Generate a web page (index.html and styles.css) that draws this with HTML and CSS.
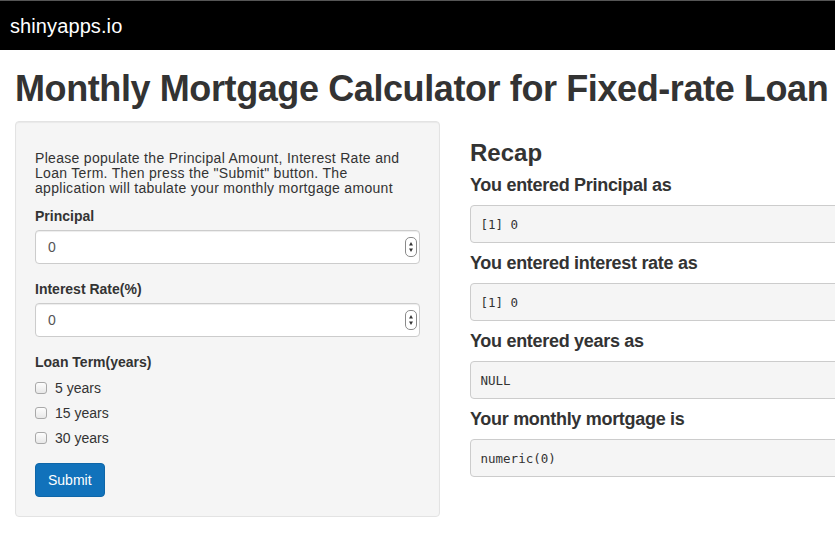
FILE: index.html
```html
<!DOCTYPE html>
<html>
<head>
<meta charset="utf-8">
<title>Monthly Mortgage Calculator</title>
<link rel="stylesheet" href="styles.css">
</head>
<body>
<div class="navbar"><span class="brand">shinyapps.io</span></div>
<div class="page">
  <h1 class="title">Monthly Mortgage Calculator for Fixed-rate Loan</h1>
  <div class="row">
    <div class="col-side">
      <form class="well">
        <h5 class="help">Please populate the Principal Amount, Interest Rate and Loan Term. Then press the "Submit" button. The application will tabulate your monthly mortgage amount</h5>
        <div class="form-group">
          <label class="control-label">Principal</label>
          <div class="num">
            <input class="form-control" type="text" value="0">
            <svg class="spin" width="12" height="20" viewBox="0 0 12 20"><rect x="0.5" y="0.5" width="11" height="19" rx="4.5" fill="#fff" stroke="#8a8a8a"/><path d="M6 5 L8 8.5 L4 8.5 Z" fill="#333"/><path d="M6 15 L8 11.5 L4 11.5 Z" fill="#333"/></svg>
          </div>
        </div>
        <div class="form-group">
          <label class="control-label">Interest Rate(%)</label>
          <div class="num">
            <input class="form-control" type="text" value="0">
            <svg class="spin" width="12" height="20" viewBox="0 0 12 20"><rect x="0.5" y="0.5" width="11" height="19" rx="4.5" fill="#fff" stroke="#8a8a8a"/><path d="M6 5 L8 8.5 L4 8.5 Z" fill="#333"/><path d="M6 15 L8 11.5 L4 11.5 Z" fill="#333"/></svg>
          </div>
        </div>
        <div class="form-group">
          <label class="control-label">Loan Term(years)</label>
          <div class="options">
            <label class="checkbox"><input type="checkbox"><span>5 years</span></label>
            <label class="checkbox"><input type="checkbox"><span>15 years</span></label>
            <label class="checkbox"><input type="checkbox"><span>30 years</span></label>
          </div>
        </div>
        <button type="button" class="btn">Submit</button>
      </form>
    </div>
    <div class="col-main">
      <h3 class="recap">Recap</h3>
      <h4>You entered Principal as</h4>
      <pre>[1] 0</pre>
      <h4>You entered interest rate as</h4>
      <pre>[1] 0</pre>
      <h4>You entered years as</h4>
      <pre>NULL</pre>
      <h4>Your monthly mortgage is</h4>
      <pre>numeric(0)</pre>
    </div>
  </div>
</div>
</body>
</html>
```

FILE: styles.css
```css
html, body {
  margin: 0;
  padding: 0;
  background: #fff;
  overflow: hidden;
}
body {
  font-family: "Liberation Sans", Arial, sans-serif;
  font-size: 14px;
  color: #333;
  width: 1365px;
}
.navbar {
  height: 50px;
  background: #000;
  border-top: 1px solid #555;
  box-sizing: border-box;
  display: flex;
  align-items: center;
  padding-left: 10px;
}
.brand {
  color: #fff;
  font-size: 20px;
  line-height: 24px;
  letter-spacing: 0.1px;
}
.page {
  padding: 0 15px;
}
.title {
  margin: 19px 0 12px;
  font-size: 36px;
  line-height: 40px;
  font-weight: bold;
  letter-spacing: -0.4px;
  color: #333;
  white-space: nowrap;
}
.row {
  display: flex;
  margin: 0 -15px;
}
.col-side {
  width: 455px;
  padding: 0 15px;
  box-sizing: border-box;
}
.col-main {
  flex: 1;
  padding: 0 15px;
}
.well {
  margin: 0;
  background: #f5f5f5;
  border: 1px solid #e3e3e3;
  border-radius: 4px;
  padding: 19px;
  box-shadow: inset 0 1px 1px rgba(0,0,0,0.05);
}
.help {
  margin: 10px 0 10px;
  font-size: 14px;
  line-height: 15px;
  font-weight: normal;
  letter-spacing: 0.3px;
}
.form-group {
  margin-bottom: 15px;
}
.control-label {
  display: block;
  font-weight: bold;
  line-height: 20px;
  margin-bottom: 4px;
}
.num {
  position: relative;
}
.form-control {
  display: block;
  box-sizing: border-box;
  width: 100%;
  height: 34px;
  padding: 6px 12px;
  font-family: "Liberation Sans", Arial, sans-serif;
  font-size: 14px;
  color: #555;
  background: #fff;
  border: 1px solid #ccc;
  border-radius: 4px;
  box-shadow: inset 0 1px 1px rgba(0,0,0,0.075);
  margin: 0;
}
.spin {
  position: absolute;
  right: 3px;
  top: 7px;
}
.options {
  padding-top: 2px;
  display: flex;
  flex-direction: column;
  gap: 5px;
}
.checkbox {
  display: flex;
  align-items: center;
  height: 20px;
  font-weight: normal;
}
.checkbox input {
  -webkit-appearance: none;
  appearance: none;
  width: 12px;
  height: 12px;
  margin: 0 8px 0 0;
  border: 1px solid #a9a9a9;
  border-radius: 3px;
  background: linear-gradient(#fdfdfd, #e8e8e8);
  box-sizing: border-box;
}
.btn {
  display: block;
  height: 34px;
  padding: 0 12px;
  font-family: "Liberation Sans", Arial, sans-serif;
  font-size: 14px;
  color: #fff;
  background: #1172bb;
  border: 1px solid #0e66a8;
  border-radius: 4px;
}
.recap {
  margin: 20px 0 10px;
  font-size: 24px;
  line-height: 24px;
  font-weight: bold;
}
h4 {
  margin: 10px 0 10px;
  font-size: 18px;
  line-height: 20px;
  font-weight: bold;
  letter-spacing: -0.3px;
}
pre {
  margin: 0 0 10px;
  padding: 9.5px 9.5px;
  font-family: "DejaVu Sans Mono", "Liberation Mono", monospace;
  font-size: 12.5px;
  line-height: 17px;
  color: #333;
  background: #f5f5f5;
  border: 1px solid #ccc;
  border-radius: 4px;
}
```
